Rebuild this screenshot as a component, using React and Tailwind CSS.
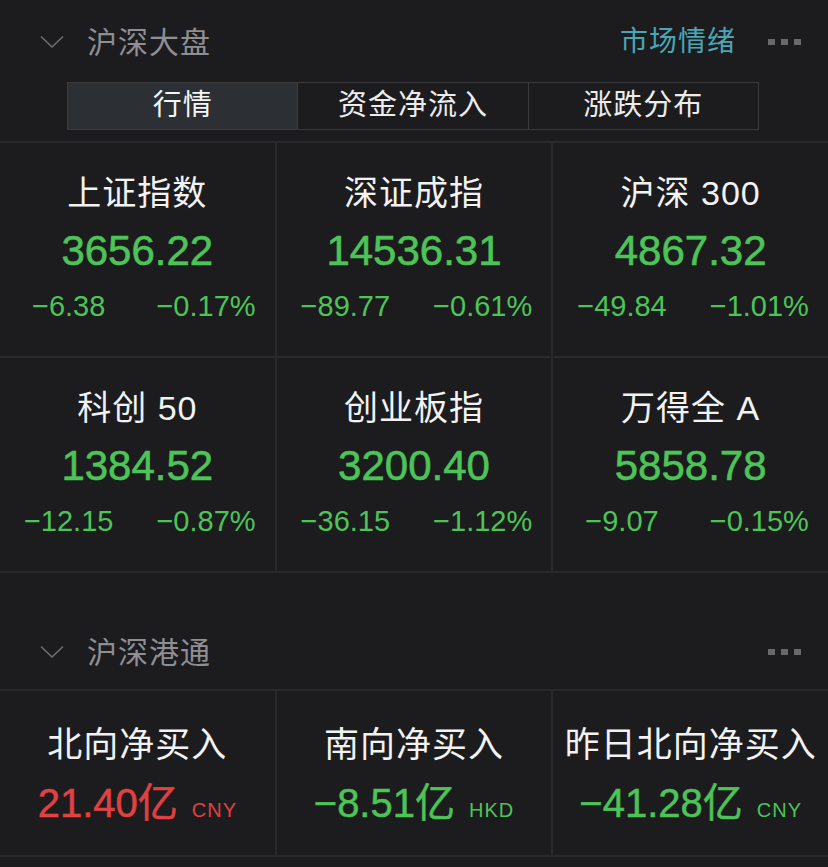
import React from "react";

const indices = [
  { name: "上证指数", value: "3656.22", chg: "−6.38", pct: "−0.17%" },
  { name: "深证成指", value: "14536.31", chg: "−89.77", pct: "−0.61%" },
  { name: "沪深 300", value: "4867.32", chg: "−49.84", pct: "−1.01%" },
  { name: "科创 50", value: "1384.52", chg: "−12.15", pct: "−0.87%" },
  { name: "创业板指", value: "3200.40", chg: "−36.15", pct: "−1.12%" },
  { name: "万得全 A", value: "5858.78", chg: "−9.07", pct: "−0.15%" },
];

const flows = [
  { name: "北向净买入", value: "21.40亿", unit: "CNY", up: true },
  { name: "南向净买入", value: "−8.51亿", unit: "HKD", up: false },
  { name: "昨日北向净买入", value: "−41.28亿", unit: "CNY", up: false },
];

function Chevron() {
  return (
    <svg width="24" height="14" viewBox="0 0 24 14" className="shrink-0">
      <path d="M1 1.5 L12 12 L23 1.5" fill="none" stroke="#6e6e72" strokeWidth="1.6" />
    </svg>
  );
}

function Dots() {
  return (
    <div className="flex gap-[6px] items-center">
      <span className="w-[7px] h-[6px] bg-[#69696c]" />
      <span className="w-[7px] h-[6px] bg-[#69696c]" />
      <span className="w-[7px] h-[6px] bg-[#69696c]" />
    </div>
  );
}

function SectionHeader({ title, right }) {
  return (
    <div className="flex items-center h-full pt-[2px] pl-[40px] pr-[27px]">
      <Chevron />
      <h3 className="ml-[23px] text-[30px] text-[#8e8e93] tracking-[1px]">{title}</h3>
      <div className="ml-auto flex items-center">
        {right && <span className="text-[28px] text-[#4aa6b6] mr-[32px] tracking-[1px]">{right}</span>}
        <Dots />
      </div>
    </div>
  );
}

function IndexCell({ item }) {
  return (
    <div className="bg-[#1c1c1e] h-[213px] flex flex-col items-center pt-[25px]">
      <div className="h-[50px] leading-[50px] text-[34px] text-[#f2f2f2] tracking-[1px]">{item.name}</div>
      <div className="h-[66px] leading-[66px] text-[42px] text-[#4cc457] [-webkit-text-stroke:0.6px_#4cc457]">
        {item.value}
      </div>
      <div className="w-full grid grid-cols-2 text-center h-[44px] leading-[44px] text-[29px] text-[#4cc457]">
        <span>{item.chg}</span>
        <span>{item.pct}</span>
      </div>
    </div>
  );
}

function FlowCell({ item }) {
  const color = item.up ? "text-[#e04141]" : "text-[#4cc457]";
  return (
    <div className="bg-[#1c1c1e] h-[164px] flex flex-col items-center pt-[30px]">
      <div className="h-[48px] leading-[48px] text-[35px] text-[#f2f2f2] tracking-[1px] whitespace-nowrap">{item.name}</div>
      <div className={`h-[68px] leading-[68px] flex items-baseline ${color}`}>
        <span className="text-[40px] [-webkit-text-stroke:0.5px_currentColor]">{item.value}</span>
        <span className="text-[20px] ml-[14px] tracking-[1px]">{item.unit}</span>
      </div>
    </div>
  );
}

export default function App() {
  const tabs = ["行情", "资金净流入", "涨跌分布"];
  return (
    <div className="w-[828px] h-[867px] bg-[#1c1c1e] overflow-hidden font-['Liberation_Sans','Noto_Sans_CJK_SC',sans-serif]">
      <div className="h-[82px]">
        <SectionHeader title="沪深大盘" right="市场情绪" />
      </div>

      <div className="flex ml-[67px] w-[692px] h-[48px] border border-[#3b3b3e]">
        {tabs.map((t, i) => (
          <div
            key={t}
            className={`flex-1 flex items-center justify-center text-[29px] tracking-[1px] ${
              i === 0 ? "bg-[#2c2f33] text-[#f5f5f5]" : "text-[#ececec]"
            } ${i > 0 ? "border-l border-[#3b3b3e]" : ""}`}
          >
            {t}
          </div>
        ))}
      </div>

      <div className="mt-[11px] grid grid-cols-3 gap-[2px] bg-[#29292b] py-[2px]">
        {indices.map((it) => (
          <IndexCell key={it.name} item={it} />
        ))}
      </div>

      <div className="mt-[40px] h-[76px]">
        <SectionHeader title="沪深港通" />
      </div>

      <div className="grid grid-cols-3 gap-[2px] bg-[#29292b] py-[2px]">
        {flows.map((it) => (
          <FlowCell key={it.name} item={it} />
        ))}
      </div>
    </div>
  );
}
